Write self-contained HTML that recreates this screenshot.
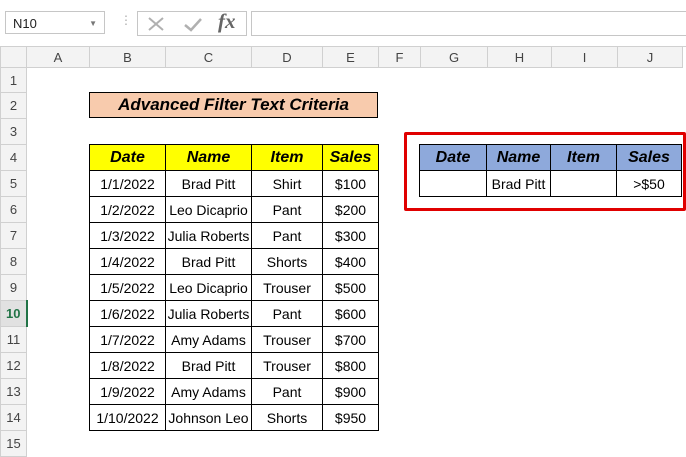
<!DOCTYPE html>
<html><head><style>
body{margin:0;width:686px;height:452px;overflow:hidden;background:#fff;font-family:"Liberation Sans",sans-serif;position:relative}
.abs{position:absolute}
table{border-collapse:collapse;table-layout:fixed}
#grid{position:absolute;left:0;top:46px}
#grid td{border:1px solid transparent;padding:0;font-size:13px;color:#444;text-align:center}
#grid tr.h td{background:#f3f3f3;border-color:#d0d0d0;height:20px}
#grid td.rh{background:#f3f3f3;border-color:#d0d0d0}
.dt td{border:1px solid #000;text-align:center;font-size:14px;color:#000;padding:0;height:25px;white-space:nowrap}
.dt tr.hd td{font-weight:bold;font-style:italic;font-size:16px}
</style></head><body>
<div class="abs" style="left:0;top:0;width:686px;height:46px;background:#fff;border-bottom:1px solid #d0d0d0"></div>
<div class="abs" style="left:5px;top:11px;width:100px;height:23px;border:1px solid #c6c6c6;font-size:13px;line-height:23px;padding-left:7px;box-sizing:border-box;color:#222">N10<span style="position:absolute;right:7px;top:0;font-size:8px;color:#777">▼</span></div>
<div class="abs" style="left:120px;top:13px;color:#aaa;font-size:12px">⋮</div>
<div class="abs" style="left:137px;top:11px;width:110px;height:25px;border:1px solid #c6c6c6;box-sizing:border-box"></div>
<svg class="abs" style="left:146px;top:15px" width="20" height="18"><path d="M3 3L17 15M17 3L3 15" stroke="#b0b0b0" stroke-width="2"/></svg>
<svg class="abs" style="left:182px;top:15px" width="22" height="18"><path d="M3 10L9 15L19 4" stroke="#b0b0b0" stroke-width="2.5" fill="none"/></svg>
<div class="abs" style="left:218px;top:9px;font-family:'Liberation Serif',serif;font-style:italic;font-weight:bold;font-size:21px;color:#666">fx</div>
<div class="abs" style="left:251px;top:11px;width:440px;height:25px;border:1px solid #c6c6c6;box-sizing:border-box"></div>
<table id="grid">
<colgroup><col style="width:26px"><col style="width:63px"><col style="width:76px"><col style="width:86px"><col style="width:71px"><col style="width:56px"><col style="width:42px"><col style="width:67px"><col style="width:64px"><col style="width:66px"><col style="width:65px"></colgroup>
<tr class="h"><td></td><td>A</td><td>B</td><td>C</td><td>D</td><td>E</td><td>F</td><td>G</td><td>H</td><td>I</td><td>J</td></tr>
<tr style="height:25px"><td class="rh">1</td><td></td><td></td><td></td><td></td><td></td><td></td><td></td><td></td><td></td><td></td></tr>
<tr style="height:26px"><td class="rh">2</td><td></td><td></td><td></td><td></td><td></td><td></td><td></td><td></td><td></td><td></td></tr>
<tr style="height:26px"><td class="rh">3</td><td></td><td></td><td></td><td></td><td></td><td></td><td></td><td></td><td></td><td></td></tr>
<tr style="height:26px"><td class="rh">4</td><td></td><td></td><td></td><td></td><td></td><td></td><td></td><td></td><td></td><td></td></tr>
<tr style="height:26px"><td class="rh">5</td><td></td><td></td><td></td><td></td><td></td><td></td><td></td><td></td><td></td><td></td></tr>
<tr style="height:26px"><td class="rh">6</td><td></td><td></td><td></td><td></td><td></td><td></td><td></td><td></td><td></td><td></td></tr>
<tr style="height:26px"><td class="rh">7</td><td></td><td></td><td></td><td></td><td></td><td></td><td></td><td></td><td></td><td></td></tr>
<tr style="height:26px"><td class="rh">8</td><td></td><td></td><td></td><td></td><td></td><td></td><td></td><td></td><td></td><td></td></tr>
<tr style="height:26px"><td class="rh">9</td><td></td><td></td><td></td><td></td><td></td><td></td><td></td><td></td><td></td><td></td></tr>
<tr style="height:26px"><td class="rh" style="background:#e1e1e1;color:#217346;font-weight:bold;border-right:2px solid #217346">10</td><td></td><td></td><td></td><td></td><td></td><td></td><td></td><td></td><td></td><td></td></tr>
<tr style="height:26px"><td class="rh">11</td><td></td><td></td><td></td><td></td><td></td><td></td><td></td><td></td><td></td><td></td></tr>
<tr style="height:26px"><td class="rh">12</td><td></td><td></td><td></td><td></td><td></td><td></td><td></td><td></td><td></td><td></td></tr>
<tr style="height:26px"><td class="rh">13</td><td></td><td></td><td></td><td></td><td></td><td></td><td></td><td></td><td></td><td></td></tr>
<tr style="height:26px"><td class="rh">14</td><td></td><td></td><td></td><td></td><td></td><td></td><td></td><td></td><td></td><td></td></tr>
<tr style="height:26px"><td class="rh">15</td><td></td><td></td><td></td><td></td><td></td><td></td><td></td><td></td><td></td><td></td></tr>
</table>
<div class="abs" style="left:89px;top:92px;width:289px;height:26px;box-sizing:border-box;border:1px solid #000;background:#f8cbad;text-align:center;font-weight:bold;font-style:italic;font-size:17px;line-height:24px">Advanced Filter Text Criteria</div>
<table class="dt abs" style="left:89px;top:144px;width:290px">
<colgroup><col style="width:76px"><col style="width:86px"><col style="width:71px"><col style="width:56px"></colgroup>
<tr class="hd" style="background:#ffff00"><td>Date</td><td>Name</td><td>Item</td><td>Sales</td></tr>
<tr><td>1/1/2022</td><td>Brad Pitt</td><td>Shirt</td><td>$100</td></tr>
<tr><td>1/2/2022</td><td>Leo Dicaprio</td><td>Pant</td><td>$200</td></tr>
<tr><td>1/3/2022</td><td>Julia Roberts</td><td>Pant</td><td>$300</td></tr>
<tr><td>1/4/2022</td><td>Brad Pitt</td><td>Shorts</td><td>$400</td></tr>
<tr><td>1/5/2022</td><td>Leo Dicaprio</td><td>Trouser</td><td>$500</td></tr>
<tr><td>1/6/2022</td><td>Julia Roberts</td><td>Pant</td><td>$600</td></tr>
<tr><td>1/7/2022</td><td>Amy Adams</td><td>Trouser</td><td>$700</td></tr>
<tr><td>1/8/2022</td><td>Brad Pitt</td><td>Trouser</td><td>$800</td></tr>
<tr><td>1/9/2022</td><td>Amy Adams</td><td>Pant</td><td>$900</td></tr>
<tr><td>1/10/2022</td><td>Johnson Leo</td><td>Shorts</td><td>$950</td></tr>
</table>
<table class="dt abs" style="left:419px;top:144px;width:262px">
<colgroup><col style="width:67px"><col style="width:64px"><col style="width:66px"><col style="width:65px"></colgroup>
<tr class="hd" style="background:#8ea9db"><td>Date</td><td>Name</td><td>Item</td><td>Sales</td></tr>
<tr><td></td><td>Brad Pitt</td><td></td><td>&gt;$50</td></tr>
</table>
<div class="abs" style="left:404px;top:132px;width:282px;height:79px;box-sizing:border-box;border:3px solid #e00000;border-radius:2px"></div>
</body></html>
